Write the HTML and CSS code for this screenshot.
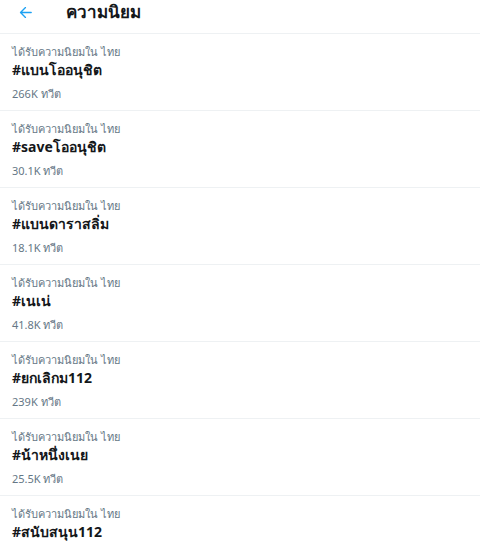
FILE: index.html
```html
<!DOCTYPE html>
<html lang="th">
<head>
<meta charset="utf-8">
<link rel="stylesheet" href="styles.css">
</head>
<body>
<header class="header">
  <svg class="back" viewBox="0 0 24 24" width="17" height="17"><path d="M20 11H7.4l5.3-5.3a1 1 0 0 0-1.4-1.4l-7 7a1 1 0 0 0 0 1.4l7 7a1 1 0 0 0 1.4-1.4L7.4 13H20a1 1 0 1 0 0-2z" fill="#1da1f2"/></svg>
  <h1 class="title">ความนิยม</h1>
</header>
<ul class="list">
  <li class="item"><div class="ctx">ได้รับความนิยมใน ไทย</div><div class="tag">#แบนโออนุชิต</div><div class="count">266K ทวีต</div></li>
  <li class="item"><div class="ctx">ได้รับความนิยมใน ไทย</div><div class="tag">#saveโออนุชิต</div><div class="count">30.1K ทวีต</div></li>
  <li class="item"><div class="ctx">ได้รับความนิยมใน ไทย</div><div class="tag">#แบนดาราสลิ่ม</div><div class="count">18.1K ทวีต</div></li>
  <li class="item"><div class="ctx">ได้รับความนิยมใน ไทย</div><div class="tag">#เนเน่</div><div class="count">41.8K ทวีต</div></li>
  <li class="item"><div class="ctx">ได้รับความนิยมใน ไทย</div><div class="tag">#ยกเลิกม112</div><div class="count">239K ทวีต</div></li>
  <li class="item"><div class="ctx">ได้รับความนิยมใน ไทย</div><div class="tag">#น้าหนึ่งเนย</div><div class="count">25.5K ทวีต</div></li>
  <li class="item"><div class="ctx">ได้รับความนิยมใน ไทย</div><div class="tag">#สนับสนุน112</div></li>
</ul>
</body>
</html>
```
FILE: styles.css
```css
* { box-sizing: border-box; }
body {
  margin: 0;
  background: #fff;
  font-family: "Noto Sans", "Open Sans", sans-serif;
  color: #14171a;
  overflow: hidden;
}
.header {
  height: 34px;
  display: flex;
  align-items: center;
  padding: 0 0 9px 17px;
  border-bottom: 1px solid #eef1f3;
}
.back { display: block; margin-right: 32px; }
.title {
  margin: 0;
  font-size: 17px;
  font-weight: 700;
  line-height: 20px;
}
.list { list-style: none; margin: 0; padding: 0; }
.item {
  height: 77px;
  padding: 10px 12px 0;
  border-bottom: 1px solid #eef1f3;
}
.ctx {
  font-size: 11px;
  color: #657786;
  line-height: 16px;
}
.tag {
  font-size: 14px;
  font-weight: 700;
  line-height: 20px;
}
.count {
  font-size: 11px;
  color: #657786;
  line-height: 16px;
  margin-top: 6px;
}
```
